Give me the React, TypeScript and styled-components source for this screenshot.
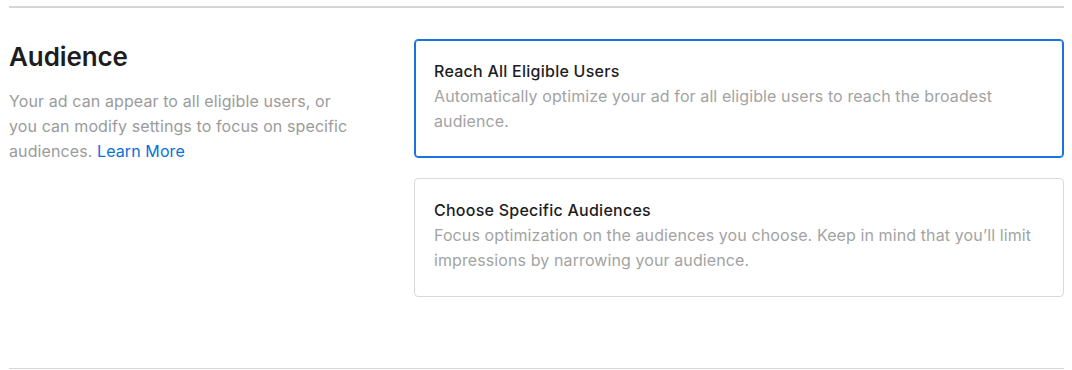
import { styled, createGlobalStyle } from "styled-components"

const GlobalStyle = createGlobalStyle`
  html, body {
    margin: 0;
    padding: 0;
    background: #ffffff;
  }
  body {
    font-family: Inter, "Liberation Sans", Arial, sans-serif;
    -webkit-font-smoothing: antialiased;
  }
`

const options = [
  {
    key: "all",
    title: "Reach All Eligible Users",
    text: "Automatically optimize your ad for all eligible users to reach the broadest audience.",
    selected: true
  },
  {
    key: "specific",
    title: "Choose Specific Audiences",
    text: "Focus optimization on the audiences you choose. Keep in mind that you\u2019ll limit impressions by narrowing your audience.",
    selected: false
  }
]

const App = () => {
  return (
    <>
      <GlobalStyle />
      <StyledPage>
        <StyledSection>
          <StyledIntro>
            <StyledHeading>Audience</StyledHeading>
            <StyledLead>
              Your ad can appear to all eligible users, or you can modify settings to focus on specific audiences.{ " " }
              <StyledLink href="#">Learn More</StyledLink>
            </StyledLead>
          </StyledIntro>
          <StyledOptions>
            {
              options.map(({ key, title, text, selected }) => (
                <StyledCard key={ key } $selected={ selected }>
                  <StyledCardTitle>{ title }</StyledCardTitle>
                  <StyledCardText>{ text }</StyledCardText>
                </StyledCard>
              ))
            }
          </StyledOptions>
        </StyledSection>
      </StyledPage>
    </>
  )
}

const StyledPage = styled("div")`
  padding: 6px 8px 0 9px;
`

const StyledSection = styled("section")`
  display: grid;
  grid-template-columns: 352px 1fr;
  column-gap: 53px;
  padding: 31px 0 71px;
  border-top: 2px solid #d6d6d6;
  border-bottom: 1px solid #d6d6d6;
`

const StyledIntro = styled("div")`
  display: flex;
  flex-direction: column;
`

const StyledHeading = styled("h2")`
  margin: 0;
  font-size: 26px;
  line-height: 36px;
  font-weight: 600;
  letter-spacing: -0.1px;
  color: #1d1d1f;
`

const StyledLead = styled("p")`
  margin: 14px 0 0;
  font-size: 16px;
  line-height: 25px;
  letter-spacing: 0.1px;
  color: #9b9b9b;
`

const StyledLink = styled("a")`
  color: #0a6fd6;
  text-decoration: none;
`

const StyledOptions = styled("div")`
  display: flex;
  flex-direction: column;
  gap: 20px;
`

const StyledCard = styled("div")<{ $selected: boolean }>`
  padding: 19px 20px 23px 19px;
  border-radius: 4px;
  border: 1px solid ${ ({ $selected }) => $selected ? "#1a73e0" : "#d9d9d9" };
  box-shadow: ${ ({ $selected }) => $selected ? "inset 0 0 0 1px #1a73e0" : "none" };
`

const StyledCardTitle = styled("div")`
  font-size: 16px;
  line-height: 25px;
  font-weight: 500;
  letter-spacing: 0.25px;
  color: #1d1d1f;
`

const StyledCardText = styled("div")`
  font-size: 16px;
  line-height: 25px;
  letter-spacing: 0.1px;
  color: #a3a3a3;
`

export default App
